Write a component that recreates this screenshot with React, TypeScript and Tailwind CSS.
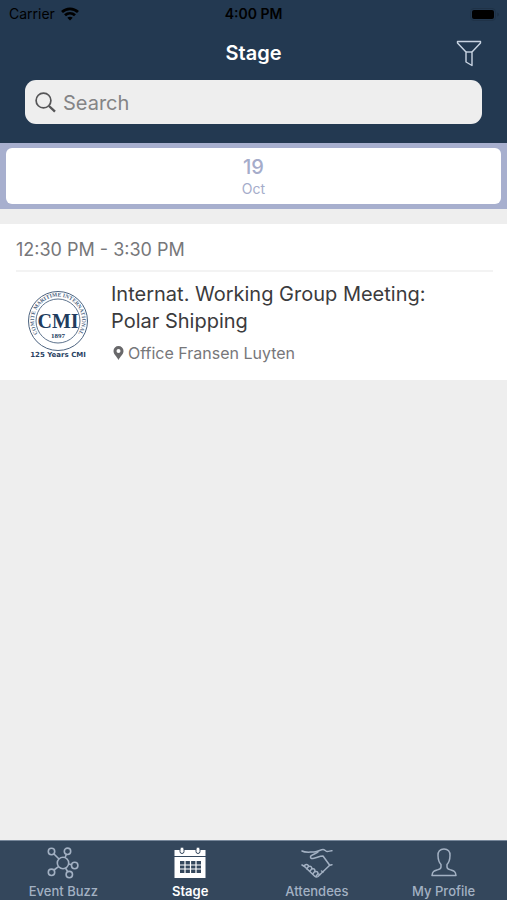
import React from "react";

function WifiIcon() {
  return (
    <svg width="18" height="14" viewBox="0 0 18 14" fill="none" stroke="currentColor" strokeWidth="2.8" aria-hidden="true">
      <path d="M1 5C5.500.8 12.500.8 17 5" />
      <path d="M4 8.300c2.900-2.700 7.100-2.700 10 0" />
      <path d="M9 13.500 6.300 10.800c1.500-1.400 3.900-1.400 5.400 0Z" fill="currentColor" stroke="none" />
    </svg>
  );
}

function BatteryIcon() {
  return (
    <svg width="30" height="13" viewBox="0 0 30 13" aria-hidden="true">
      <rect x="0.500" y="0.500" width="25" height="12" rx="3.500" fill="none" stroke="#1f3247" />
      <rect x="2" y="2" width="22" height="9" rx="2" fill="#000" />
      <path d="M27.500 4.500c1.500.5 1.500 3.500 0 4Z" fill="#1b2c3f" />
    </svg>
  );
}

function FilterIcon() {
  return (
    <svg width="26" height="27" viewBox="0 0 26 27" fill="none" stroke="#c9d4e2" strokeWidth="1.400" strokeLinejoin="round" aria-hidden="true">
      <path d="M1.500 1.500h23v1.500l-8.500 9v13.500l-6-3.500V12L1.500 3Z" />
      <path d="M10 12h6" />
    </svg>
  );
}

function SearchIcon() {
  return (
    <svg width="21" height="21" viewBox="0 0 21 21" fill="none" stroke="#555557" aria-hidden="true">
      <circle cx="8.500" cy="8.500" r="7.400" strokeWidth="1.700" />
      <path d="m14 14 6 5.700" strokeWidth="2.400" />
    </svg>
  );
}

function PinIcon() {
  return (
    <svg width="11" height="14" viewBox="0 0 11 14" aria-hidden="true">
      <path
        d="M5.500 0A5 5 0 0 0 .5 5c0 3.400 3.500 5.700 5 9 1.500-3.300 5-5.600 5-9a5 5 0 0 0-5-5Zm0 3a2 2 0 1 1 0 4 2 2 0 0 1 0-4Z"
        fill="#68686a"
        fillRule="evenodd"
      />
    </svg>
  );
}

function CmiLogo() {
  return (
    <svg width="64" height="70" viewBox="0 0 64 70" role="img" aria-label="CMI 125 years" className="shrink-0">
      <defs>
        <path id="ring" d="M15 47.500A24 24 0 1 1 49 47.500" />
      </defs>
      <g fill="none" stroke="#4c6380">
        <circle cx="32" cy="31" r="29.500" strokeWidth="1" />
        <circle cx="32" cy="31" r="22" strokeWidth="0.900" />
      </g>
      <rect x="12" y="24" width="40" height="14" fill="#fff" />
      <g fill="#213c5e" className="font-['Liberation_Serif',serif]" textAnchor="middle">
        <text fontSize="5.500" fontWeight="700" fill="#4c6380">
          <textPath href="#ring" startOffset="50%">COMITE MARITIME INTERNATIONAL</textPath>
        </text>
        <text x="32" y="38" fontSize="20" fontWeight="700">CMI</text>
        <text x="32" y="48" fontSize="7" fontWeight="700">1897</text>
      </g>
      <text x="32" y="67" fontSize="7" fontWeight="700" fill="#2a4263" textAnchor="middle" className="font-['DejaVu_Sans',sans-serif]">
        125 Years CMI
      </text>
    </svg>
  );
}

function BuzzIcon() {
  return (
    <svg width="32" height="32" viewBox="0 0 32 32" fill="none" stroke="currentColor" strokeWidth="1.600" aria-hidden="true">
      <circle cx="16" cy="16" r="5.700" />
      <circle cx="4.500" cy="4.500" r="3.200" />
      <circle cx="20.500" cy="4.300" r="3.200" />
      <circle cx="27.700" cy="18.500" r="3.200" />
      <circle cx="4.500" cy="25.300" r="3.200" />
      <circle cx="22.300" cy="27.600" r="3.200" />
      <path d="m7 7 5 5M19.300 7.500 18 10.700M21.700 17l3 .8M7 23l4.500-3.400M18.600 21.200l2.200 3.500" />
    </svg>
  );
}

function CalendarIcon() {
  return (
    <svg width="32" height="32" viewBox="0 0 32 32" aria-hidden="true">
      <path d="M0.500 3h31v6H.5ZM.5 10h31v21H.5Z" fill="#fff" />
      <g fill="#fff" stroke="#34475c" strokeWidth="1">
        <rect x="6" y="0" width="4" height="6.500" rx="2" />
        <rect x="22" y="0" width="4" height="6.500" rx="2" />
      </g>
      <rect x="6" y="14" width="21" height="12" fill="#34475c" />
      <path d="M6 18h21M6 22h21M11 14v12M16.500 14v12M22 14v12" stroke="#fff" strokeWidth="1.200" />
    </svg>
  );
}

function HandshakeIcon() {
  return (
    <svg width="32" height="32" viewBox="0 0 32 32" fill="none" stroke="currentColor" strokeWidth="1.500" strokeLinejoin="round" strokeLinecap="round" aria-hidden="true">
      <path d="M1 4c3 1.800 7 1 12 1 4 0 6.500-2.500 9-2.500 2 0 2.500 2 4.500 2 1.800 0 2.500-1 4.500-.8" />
      <path d="M17 5c-2 1.800-5.500 2.200-7.200 4-1 1.500.2 2.700 2.200 2.500 3.500-.3 6-2.500 10-2.500l6.700 9.200 2.300-.5" />
      <path d="M28.700 18.200 17 29.500c-1 .8-2 .8-3 0L3.500 19.500 1 18" />
      <path d="M3.500 19.500c0-2.700 3.700-2.700 4 0l-1.800 2.300M7.500 19.700c2.200-1.200 4 .5 3 2.500L8.700 24.300M10.700 22c2.200-1 3.800.5 3 2.500L11.800 27M14 24.700c2-.8 3.300.5 2.800 2.300l-2 2.500M17 26.700l1.800 1M20.500 24l1.500 1" />
    </svg>
  );
}

function PersonIcon() {
  return (
    <svg width="32" height="32" viewBox="0 0 32 32" fill="none" stroke="currentColor" strokeWidth="1.500" strokeLinejoin="round" aria-hidden="true">
      <path d="M16 2c-4 0-6.200 2.500-6 6.500.1 4 1 7 3 9v2.500c0 2-1.500 2.300-4 3-3 .8-4.500 1.500-5 5.500h24c-.5-4-2-4.700-5-5.500-2.500-.7-4-1-4-3v-2.500c2-2 2.900-5 3-9 .2-4-2-6.500-6-6.500Z" />
    </svg>
  );
}

const tabs = [
  { label: "Event Buzz", Icon: BuzzIcon, active: false },
  { label: "Stage", Icon: CalendarIcon, active: true },
  { label: "Attendees", Icon: HandshakeIcon, active: false },
  { label: "My Profile", Icon: PersonIcon, active: false },
];

export default function App() {
  return (
    <div className="flex min-h-screen flex-col bg-[#eeeeee] font-['Inter','Liberation_Sans',sans-serif]">
      <header className="bg-[#233951] pb-[19px]">
        <div className="grid h-7 grid-cols-3 items-center px-[7px] text-sm text-black">
          <div className="flex items-center gap-[6px] pl-[2px]">
            <span>Carrier</span>
            <WifiIcon />
          </div>
          <time className="text-center font-semibold">4:00 PM</time>
          <div className="flex justify-end">
            <BatteryIcon />
          </div>
        </div>
        <div className="grid h-[52px] grid-cols-[1fr_auto_1fr] items-center px-[25px] pb-[2px]">
          <h1 className="col-start-2 text-[20px] leading-7 font-semibold text-white">Stage</h1>
          <button type="button" aria-label="Filter" className="justify-self-end">
            <FilterIcon />
          </button>
        </div>
        <label className="mx-[25px] flex h-11 items-center gap-[7px] rounded-[11px] bg-[#eeeeee] px-[10px]">
          <SearchIcon />
          <input
            type="search"
            aria-label="Search"
            placeholder="Search"
            className="min-w-0 flex-1 bg-transparent pt-[2px] text-[20px] leading-7 text-[#333333] outline-none placeholder:text-[#848486]"
          />
        </label>
      </header>

      <nav aria-label="Dates" className="bg-[#a7afce] px-[6px] py-[5px]">
        <button type="button" className="flex h-14 w-full flex-col items-center justify-center rounded-md bg-white pt-[2px] text-[#a5acca]">
          <span className="text-[20px] leading-6 font-medium">19</span>
          <span className="text-sm leading-5">Oct</span>
        </button>
      </nav>

      <main className="flex-1 pt-[15px]">
        <section className="bg-white pr-[14px] pb-[17px] pl-4">
          <h2 className="border-b-2 border-[#f3f3f3] pt-3 pb-[7px] text-[18px] leading-[27px] text-[#77777a]">
            12:30 PM - 3:30 PM
          </h2>
          <article className="flex pt-[9px] pl-[10px]">
            <div className="pt-[9px]">
              <CmiLogo />
            </div>
            <div className="min-w-0 flex-1 pl-[21px]">
              <h3 className="max-w-[330px] text-[20px] leading-[27px] text-[#3b3b3d]">
                Internat. Working Group Meeting: Polar Shipping
              </h3>
              <p className="flex items-center gap-1 pt-2 pl-[2px] text-[16px] leading-5 text-[#77777a]">
                <PinIcon />
                <span>Office Fransen Luyten</span>
              </p>
            </div>
          </article>
        </section>
      </main>

      <nav aria-label="Main" className="grid grid-cols-4 border-t border-[#77879a] bg-[#34475c] pt-[6px]">
        {tabs.map(({ label, Icon, active }) => (
          <button
            key={label}
            type="button"
            aria-current={active ? "page" : undefined}
            className={
              active
                ? "flex flex-col items-center gap-[3px] text-[13px] leading-[18px] font-semibold text-white"
                : "flex flex-col items-center gap-[3px] text-[13px] leading-[18px] font-medium text-[#a3b1c3]"
            }
          >
            <Icon />
            <span>{label}</span>
          </button>
        ))}
      </nav>
    </div>
  );
}
